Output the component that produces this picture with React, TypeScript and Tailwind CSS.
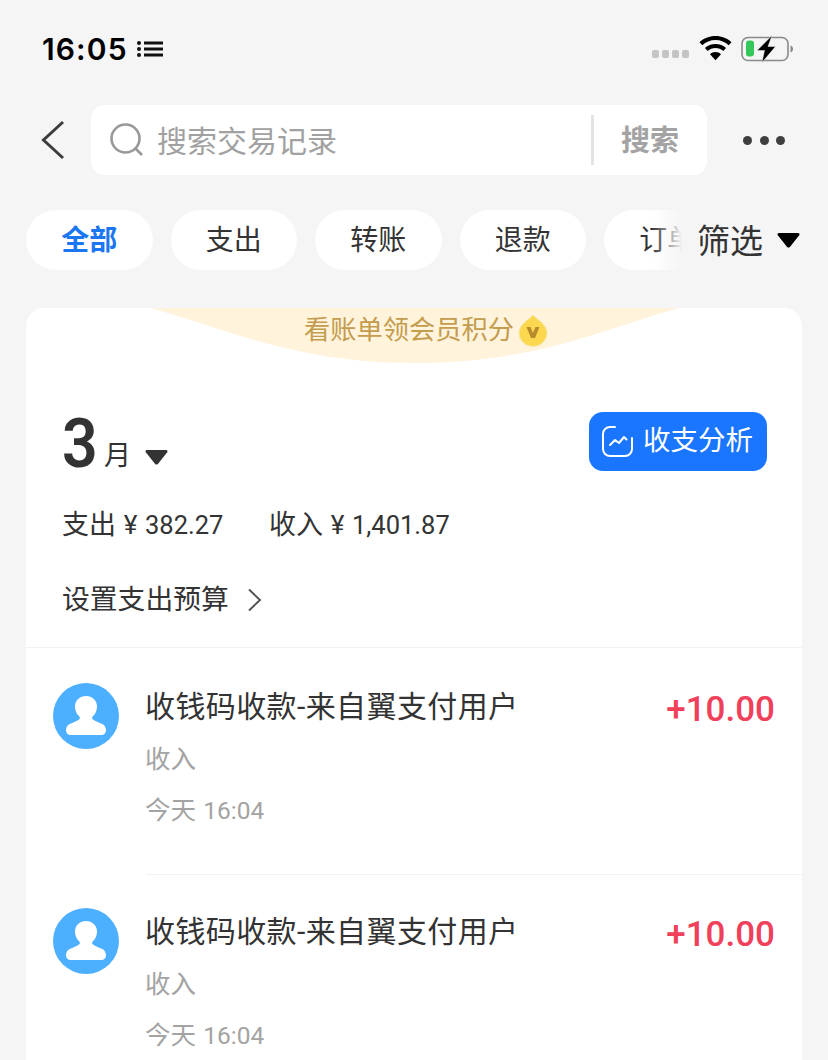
import * as React from 'react'

const FONT = 'font-[Roboto,"Noto_Sans_CJK_SC",sans-serif]'

const chips = ['全部', '支出', '转账', '退款', '订单']

function Battery() {
  return (
    <svg width="54" height="28" viewBox="0 0 54 28" fill="none">
      <rect x="1" y="2.500" width="46" height="23" rx="6" stroke="#8a8a8a" strokeWidth="1.600" />
      <rect x="5" y="5.500" width="8" height="16" rx="3" fill="#34c759" />
      <path d="M49.500 10.500c1.600.5 2.500 1.800 2.500 3.500s-.9 3-2.500 3.500z" fill="#8a8a8a" />
      <path d="M31 .5 16 15.500h7.500L21 27.500 34.500 11.500h-7.500z" fill="#000" stroke="#f5f5f5" strokeWidth=".5" />
    </svg>
  )
}

function Wifi() {
  return (
    <svg width="33" height="25" viewBox="0 0 33 25" fill="#000">
      <path d="M16.500 0C10.200 0 4.700 2.300.5 6.200l2.800 3C6.800 6 11.400 4 16.500 4s9.700 2 13.200 5.200l2.800-3C28.300 2.300 22.800 0 16.500 0z" />
      <path d="M16.500 8c-4.100 0-7.800 1.500-10.600 4.100l2.800 3C10.800 13.200 13.500 12 16.500 12s5.700 1.200 7.800 3.100l2.800-3C24.300 9.500 20.600 8 16.500 8z" />
      <path d="M16.500 16c-2.100 0-4.100.8-5.500 2.200l5.500 6 5.500-6c-1.400-1.400-3.400-2.200-5.500-2.200z" />
    </svg>
  )
}

function Caret({ color }: { color: string }) {
  return (
    <svg width="23" height="16" viewBox="0 0 23 16">
      <path d="M2 1h19c1.400 0 2 1.200 1.200 2.300l-9.300 11.600c-.7.8-2.100.8-2.800 0L.8 3.300C0 2.200.6 1 2 1z" fill={color} />
    </svg>
  )
}

function Avatar() {
  return (
    <svg width="66" height="66" viewBox="0 0 66 66" className="shrink-0">
      <circle cx="33" cy="33" r="33" fill="#4dafff" />
      <path
        d="M33 13c-6.200 0-11 4.500-11 10.500 0 4.300 1.700 7.600 4.300 10 .8.800.8 2.200 0 2.800-2 1.600-5.600 3.100-9 4.500-2.800 1.200-4.300 3.500-4.300 6.500 0 2.500 1.500 4.700 4 4.700h32c2.500 0 4-2.200 4-4.700 0-3-1.500-5.300-4.300-6.500-3.400-1.400-7-2.900-9-4.500-.8-.6-.8-2 0-2.800 2.600-2.400 4.300-5.700 4.300-10C44 17.500 39.200 13 33 13z"
        fill="#fff"
      />
    </svg>
  )
}

function Money({ label, value }: { label: string; value: string }) {
  return (
    <span className="flex items-center">
      <span className="text-[27px]">{label}</span>
      <span className="w-[29px] text-center text-[26px]">¥</span>
      <span className="text-[25.500px]">{value}</span>
    </span>
  )
}

function TxRow() {
  return (
    <div className="flex h-[225px] items-start pl-[27px]">
      <div className="pt-[35px]">
        <Avatar />
      </div>
      <div className="ml-[27px] flex h-[227px] flex-1 flex-col border-b border-[#f2f2f2] pt-[39px]">
        <div className="flex items-start justify-between pr-[27px]">
          <span className="-ml-px text-[30px] leading-[40px] tracking-[0.400px] text-[#333]">收钱码收款-来自翼支付用户</span>
          <span className="mt-[2px] text-[35px] leading-[42px] font-medium text-[#f0405a]">+10.00</span>
        </div>
        <span className="mt-[10px] -ml-px text-[25.500px] leading-[36px] text-[#a3a3a3]">收入</span>
        <span className="mt-[14px] -ml-px leading-[38px] text-[#a3a3a3]">
          <span className="text-[25.500px]">今天 </span>
          <span className="ml-px text-[24.500px]">16:04</span>
        </span>
      </div>
    </div>
  )
}

export default function App() {
  return (
    <div className={`h-[1060px] w-[828px] overflow-hidden bg-[#f5f5f5] ${FONT}`}>
      {/* status bar */}
      <div className="flex h-[105px] items-start justify-between pr-[33px] pl-[42px]">
        <div className="mt-[30px] flex items-center">
          <span className="font-[Inter,sans-serif] text-[30px] leading-[38px] font-semibold tracking-[1.100px] text-black">16:05</span>
          <svg width="27" height="20" viewBox="0 0 27 20" className="ml-[9px]" fill="#111">
            <rect x="0" y="2" width="4" height="4" rx="2" />
            <rect x="0" y="8" width="4" height="4" rx="2" />
            <rect x="0" y="14" width="4" height="4" rx="2" />
            <rect x="7" y="2.500" width="19" height="3" />
            <rect x="7" y="8.500" width="19" height="3" />
            <rect x="7" y="14.500" width="19" height="3" />
          </svg>
        </div>
        <div className="mt-[35px] flex items-center">
          <div className="mt-[10px] flex gap-[2.500px]">
            <span className="size-[7.500px] rounded-[2px] bg-[#c4c4c4]" />
            <span className="size-[7.500px] rounded-[2px] bg-[#c4c4c4]" />
            <span className="size-[7.500px] rounded-[2px] bg-[#c4c4c4]" />
            <span className="size-[7.500px] rounded-[2px] bg-[#c4c4c4]" />
          </div>
          <div className="mt-[-2px] ml-[10px]">
            <Wifi />
          </div>
          <div className="ml-[9px]">
            <Battery />
          </div>
        </div>
      </div>

      {/* search row */}
      <div className="flex h-[70px] items-center">
        <svg width="24" height="40" viewBox="0 0 24 40" fill="none" className="ml-[41px]">
          <path d="M22 2 2.500 20 22 38" stroke="#3d3d3d" strokeWidth="3" />
        </svg>
        <div className="ml-[26px] flex h-[70px] w-[616px] items-center rounded-[14px] bg-white">
          <svg width="34" height="34" viewBox="0 0 34 34" fill="none" className="ml-[19px]">
            <circle cx="15.500" cy="15.500" r="14" stroke="#999" strokeWidth="2.600" />
            <path d="M25.500 25.500 32 32" stroke="#999" strokeWidth="2.600" />
          </svg>
          <span className="mt-[3px] ml-[13px] flex-1 text-[30px] text-[#a1a1a1]">搜索交易记录</span>
          <span className="h-[50px] w-[3px] bg-[#e3e3e3]" />
          <span className="mt-[3px] mr-[28px] ml-[27px] text-[29px] font-bold text-[#a3a3a3]">搜索</span>
        </div>
        <div className="ml-[36px] flex gap-[7.500px]">
          <span className="size-[9px] rounded-full bg-[#3f3f3f]" />
          <span className="size-[9px] rounded-full bg-[#3f3f3f]" />
          <span className="size-[9px] rounded-full bg-[#3f3f3f]" />
        </div>
      </div>

      {/* filter chips */}
      <div className="relative mt-[35px] h-[60px]">
        <div className="flex gap-[18px] overflow-hidden pl-[26px]">
          {chips.map((c, i) => (
            <span
              key={c}
              className={`flex h-[60px] w-[126.500px] shrink-0 items-center justify-center rounded-full bg-white pt-[2px] text-[28px] ${
                i === 0 ? 'font-bold text-[#1a76f2]' : 'text-[#333]'
              }`}
            >
              {c}
            </span>
          ))}
        </div>
        <div className="absolute top-0 right-0 flex h-[60px] w-[176px] items-center">
          <div className="h-full w-[30px] bg-gradient-to-r from-[#f5f5f500] to-[#f5f5f5]" />
          <div className="flex h-full flex-1 items-center bg-[#f5f5f5] pl-[15px]">
            <span className="pt-[3px] text-[33px] text-[#333]">筛选</span>
            <span className="ml-[14px] flex">
              <Caret color="#000" />
            </span>
          </div>
        </div>
      </div>

      {/* card */}
      <div className="relative mx-[26px] mt-[38px] h-[800px] overflow-hidden rounded-t-[18px] bg-white">
        <svg width="530" height="55" viewBox="0 0 530 55" className="absolute top-0 left-[124px]">
          <path d="M0 0h530C460 18 390 55 265 55S70 18 0 0z" fill="#fff3dc" />
        </svg>
        <div className="absolute top-[4px] left-[278px] flex items-center">
          <span className="text-[26.250px] leading-[36px] text-[#c39c4d]">看账单领会员积分</span>
          <svg width="30" height="33" viewBox="0 0 30 33" className="ml-[4px]">
            <path d="M15 1c3 4 14 9 14 18a14 13.500 0 0 1-28 0C1 10 12 5 15 1z" fill="#fbd84f" stroke="#f3e7a0" />
            <path d="M8.500 13h4l2.500 6 2.500-6h4L17 24h-4z" fill="#b98a2c" />
          </svg>
        </div>

        {/* month + analysis */}
        <div className="flex items-start justify-between pt-[104px] pr-[35px] pl-[36px]">
          <div className="flex items-end">
            <span className="inline-block w-[33px] origin-left scale-x-[0.92] text-[68px] leading-[64px] font-semibold text-[#333]">3</span>
            <span className="ml-[9px] text-[27px] leading-[40px] text-[#333]">月</span>
            <span className="mb-[11px] ml-[14px] flex">
              <Caret color="#333" />
            </span>
          </div>
          <div className="flex h-[59px] w-[178px] items-center rounded-[14px] bg-[#1a76ff]">
            <svg width="33" height="33" viewBox="0 0 33 33" fill="none" stroke="#fff" strokeWidth="2" strokeLinecap="round" strokeLinejoin="round" className="ml-[12px]">
              <path d="M14 2H9a7 7 0 0 0-7 7v15a7 7 0 0 0 7 7h15a7 7 0 0 0 7-7v-11" />
              <path d="M9 20l5-5 4 3 5-6 2.500 2.500" />
            </svg>
            <span className="-mt-px ml-[9px] text-[27.500px] text-white">收支分析</span>
          </div>
        </div>

        <div className="mt-[31px] flex pl-[36px] leading-[36px] text-[#333]">
          <span className="w-[207px]">
            <Money label="支出" value="382.27" />
          </span>
          <Money label="收入" value="1,401.87" />
        </div>

        <div className="mt-[39px] flex items-center pl-[36px] text-[27.800px] leading-[36px] text-[#333]">
          <span>设置支出预算</span>
          <svg width="15" height="24" viewBox="0 0 15 24" fill="none" className="ml-[18px]">
            <path d="M2 1.500 13 12 2 22.500" stroke="#555" strokeWidth="2" />
          </svg>
        </div>

        <div className="mt-[29px] border-t border-[#f2f2f2]">
          <TxRow />
          <TxRow />
        </div>
      </div>
    </div>
  )
}
